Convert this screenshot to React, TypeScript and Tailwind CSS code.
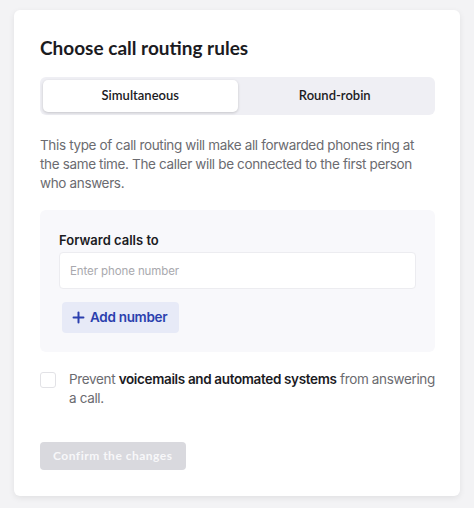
import { useState } from 'react';
import { Plus } from 'lucide-react';

const geo = { fontFamily: 'Lato, "Noto Sans", sans-serif' };

export default function App() {
  const [mode, setMode] = useState<'simultaneous' | 'round'>('simultaneous');
  const [blockBots, setBlockBots] = useState(false);

  return (
    <div className="h-[508px] overflow-hidden bg-[#f3f3f5] px-[14px] pt-[10px]" style={{ fontFamily: 'Inter, "Liberation Sans", sans-serif' }}>
      <div className="bg-white rounded-md shadow-[0_2px_6px_rgba(0,0,0,0.08)] pl-[26px] pr-[25px] pt-[26px] pb-[26px]">
        {/* Title */}
        <h1 className="text-[19px] leading-[24px] font-bold text-[#1b1b1f]" style={geo}>
          Choose call routing rules
        </h1>

        {/* Segmented control */}
        <div className="mt-[17px] flex bg-[#efeff4] rounded-md p-[3px] h-[38px]" style={geo}>
          <button
            className={`flex-1 rounded-[5px] text-[13px] font-semibold text-[#1b1b1f] ${mode === 'simultaneous' ? 'bg-white shadow-[0_1px_3px_rgba(0,0,0,0.18)]' : ''}`}
            onClick={() => setMode('simultaneous')}
          >
            Simultaneous
          </button>
          <button
            className={`flex-1 rounded-[5px] text-[13px] font-semibold text-[#1b1b1f] ${mode === 'round' ? 'bg-white shadow-[0_1px_3px_rgba(0,0,0,0.18)]' : ''}`}
            onClick={() => setMode('round')}
          >
            Round-robin
          </button>
        </div>

        {/* Description */}
        <p className="mt-[21px] text-[13.5px] leading-[19px] tracking-[-0.35px] text-[#6b6b70]">
          This type of call routing will make all forwarded phones ring at the same time. The caller will be connected to the first person who answers.
        </p>

        {/* Forward panel */}
        <div className="mt-[17px] bg-[#f8f8fb] rounded-md px-[19px] pt-[21px] pb-[19px]">
          <label className="block text-[13px] leading-[18px] font-semibold text-[#1b1b1f]">Forward calls to</label>
          <input
            className="mt-[3px] w-full h-[37px] bg-white border border-[#ececf0] rounded-[4px] px-[10px] text-[11.5px] tracking-[-0.1px] text-[#1b1b1f] placeholder:text-[#a9a9ae] outline-none"
            placeholder="Enter phone number"
          />
          <button className="mt-[13px] ml-[3px] flex items-center gap-[3px] h-[31px] pl-[8px] pr-[12px] bg-[#e7eaf7] rounded-[4px] text-[13.5px] tracking-[-0.3px] font-semibold text-[#2b3fae]">
            <Plus className="w-[17px] h-[17px]" strokeWidth={2.8} />
            Add number
          </button>
        </div>

        {/* Checkbox */}
        <label className="mt-[18px] flex items-start gap-[13px] cursor-pointer">
          <input
            type="checkbox"
            checked={blockBots}
            onChange={() => setBlockBots(!blockBots)}
            className="appearance-none mt-[2px] w-[16px] h-[16px] shrink-0 border border-[#e2e2e6] rounded-[3px] bg-white checked:bg-[#2b3fae]"
          />
          <span className="text-[13.5px] leading-[19px] tracking-[-0.35px] text-[#6b6b70]">
            Prevent <span className="font-semibold text-[#1b1b1f]">voicemails and automated systems</span> from answering a call.
          </span>
        </label>

        {/* Confirm */}
        <button
          disabled
          className="mt-[34px] h-[28px] px-[13px] rounded-[4px] bg-[#d9d9de] text-[#f7f7f9] text-[12px] font-bold tracking-[0.5px]"
          style={geo}
        >
          Confirm the changes
        </button>
      </div>
    </div>
  );
}
